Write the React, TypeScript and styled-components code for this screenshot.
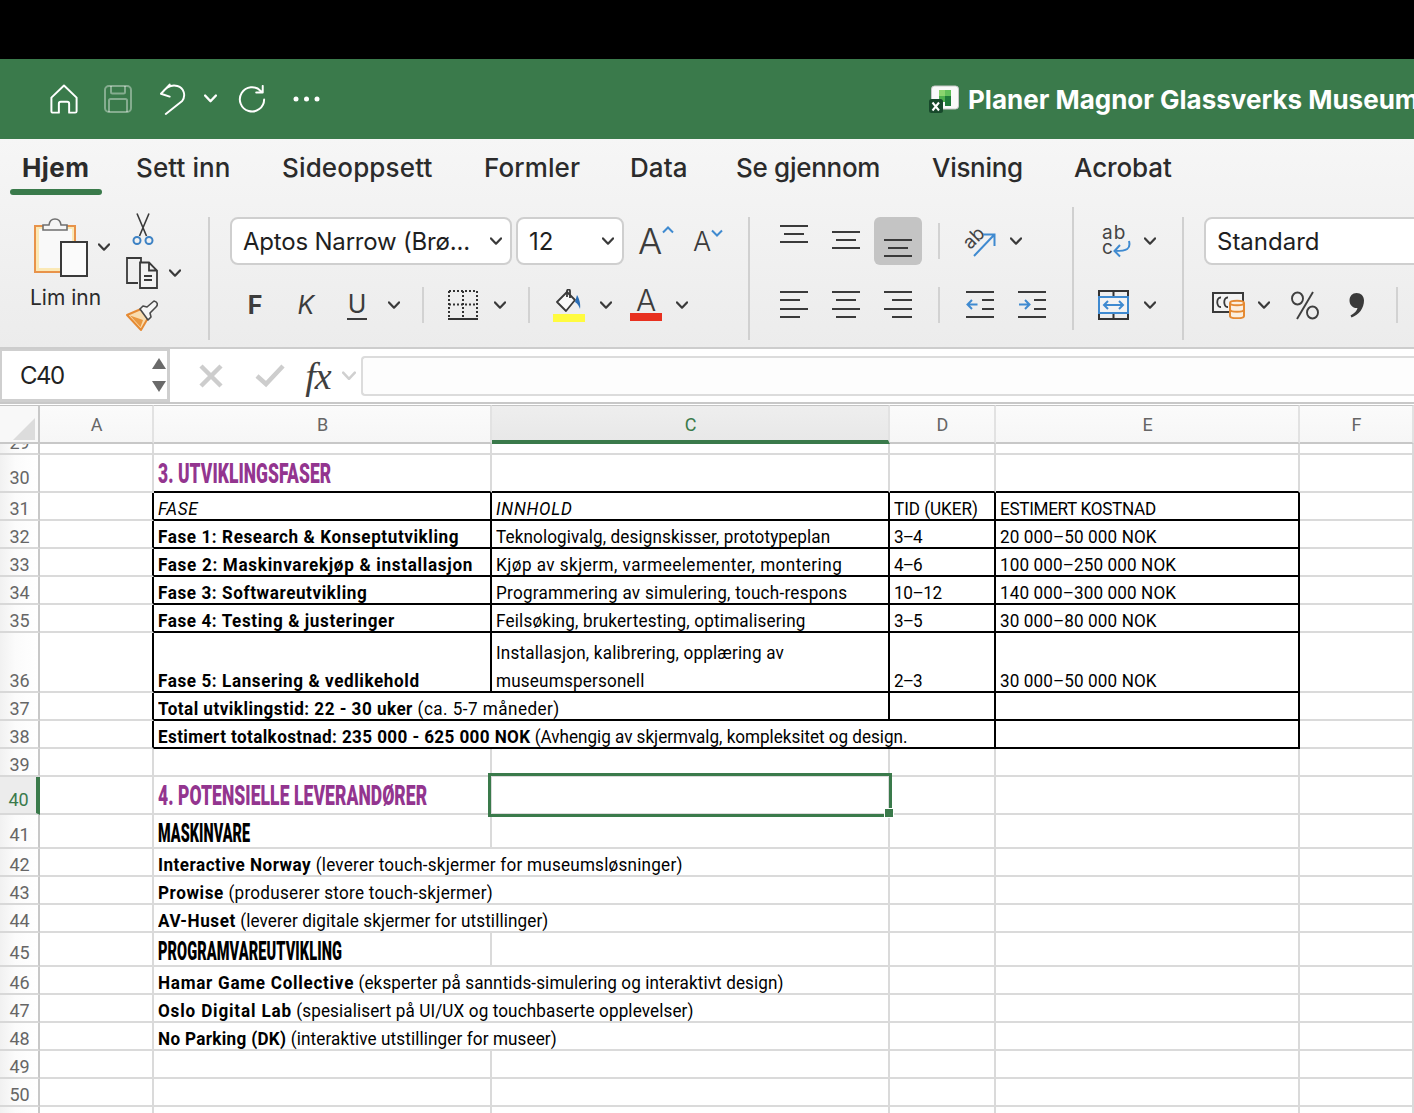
import React from "react";
import styled, { createGlobalStyle } from "styled-components";

const GREEN = "#3a7a4b";
const INK = "#3c3c3c";
const UI = `Inter, "Liberation Sans", sans-serif`;
const CELL = `Roboto, "Liberation Sans", sans-serif`;

const Global = createGlobalStyle`
  html, body { margin: 0; padding: 0; background: #fff; overflow: hidden; }
  body { width: 1414px; height: 1113px; font-family: ${UI}; }
`;

const Page = styled.div`
  width: 1414px;
  height: 1113px;
  overflow: hidden;
  display: flex;
  flex-direction: column;
`;
const BlackBar = styled.div`
  height: 59px;
  flex: none;
  background: #000;
`;
const TitleBar = styled.div`
  height: 80px;
  flex: none;
  background: ${GREEN};
  display: flex;
  align-items: center;
  padding-left: 50px;
  overflow: hidden;
`;
const QuickIcons = styled.div`
  display: flex;
  align-items: center;
  width: 879px;
  flex: none;
`;
const QuickSlot = styled.div<{ $w: number }>`
  width: ${(p) => p.$w}px;
  flex: none;
  display: flex;
  align-items: center;
`;
const DocTitle = styled.div`
  display: flex;
  align-items: center;
  flex: none;
  gap: 9px;
  color: #fff;
  font-weight: 700;
  font-size: 26px;
  white-space: nowrap;
`;
const Ribbon = styled.div`
  height: 210px;
  flex: none;
  box-sizing: border-box;
  border-bottom: 2px solid #cdcdcd;
  background: linear-gradient(#f6f6f6, #ececec);
  overflow: hidden;
`;
const Tabs = styled.div`
  height: 62px;
  display: flex;
  padding-left: 10px;
`;
const Tab = styled.div<{ $w: number; $ls?: number; $active?: boolean }>`
  position: relative;
  width: ${(p) => p.$w}px;
  flex: none;
  box-sizing: border-box;
  height: 56px;
  line-height: 58px;
  padding-left: 12px;
  font-size: 26px;
  letter-spacing: ${(p) => p.$ls ?? 0}px;
  color: #2b2b2b;
  font-weight: ${(p) => (p.$active ? 700 : 500)};
  white-space: nowrap;
  &::after {
    content: "";
    display: ${(p) => (p.$active ? "block" : "none")};
    position: absolute;
    left: 0;
    width: 92px;
    top: 50px;
    height: 6px;
    border-radius: 3px;
    background: ${GREEN};
  }
`;
const ToolArea = styled.div`
  display: flex;
  height: 146px;
`;
const Group = styled.div<{ $w?: number; $ml?: number }>`
  ${(p) => (p.$w ? `width: ${p.$w}px; flex: none;` : "flex: 1;")}
  padding: 16px 0 0 ${(p) => p.$ml ?? 0}px;
  box-sizing: border-box;
  display: flex;
  flex-direction: column;
  gap: 16px;
`;
const ClipGroup = styled.div`
  width: 208px;
  flex: none;
  display: flex;
  padding: 12px 0 0 34px;
  box-sizing: border-box;
`;
const PasteCol = styled.div`
  width: 92px;
  flex: none;
  padding-top: 4px;
`;
const PasteTop = styled.div`
  display: flex;
  align-items: center;
  gap: 10px;
`;
const PasteLabel = styled.div`
  margin: 7px 0 0 -4px;
  font-size: 21px;
  line-height: 28px;
  color: #2b2b2b;
`;
const ClipStack = styled.div`
  display: flex;
  flex-direction: column;
  gap: 12px;
`;
const ClipLine = styled.div<{ $ml?: number; $mt?: number }>`
  display: flex;
  align-items: center;
  gap: 11px;
  height: 32px;
  margin: ${(p) => p.$mt ?? 0}px 0 0 ${(p) => p.$ml ?? 0}px;
`;
const VDivider = styled.div<{ $top: number }>`
  width: 2px;
  flex: none;
  height: 123px;
  margin-top: ${(p) => p.$top}px;
  background: #d0d0d0;
`;
const ToolRow = styled.div`
  display: flex;
  align-items: center;
  height: 48px;
`;
const Slot = styled.div<{ $w: number; $on?: boolean; $ml?: number }>`
  width: ${(p) => p.$w}px;
  height: 48px;
  flex: none;
  margin-left: ${(p) => p.$ml ?? 0}px;
  display: flex;
  align-items: center;
  justify-content: center;
  border-radius: 6px;
  background: ${(p) => (p.$on ? "#c4c4c4" : "transparent")};
`;
const Select = styled.div<{ $w: number; $ls?: number }>`
  width: ${(p) => p.$w}px;
  height: 48px;
  flex: none;
  box-sizing: border-box;
  border: 2px solid #cfcfcf;
  border-radius: 8px;
  background: #fff;
  display: flex;
  align-items: center;
  justify-content: space-between;
  padding: 0 8px 0 11px;
  margin-right: 4px;
  font-size: 24px;
  letter-spacing: ${(p) => p.$ls ?? 0}px;
  color: #1f1f1f;
  white-space: nowrap;
`;
const ThinDiv = styled.div`
  width: 2px;
  height: 36px;
  background: #d2d2d2;
`;
const LetterBtn = styled.span<{ $italic?: boolean; $bold?: boolean; $under?: boolean }>`
  font-size: 25px;
  font-weight: ${(p) => (p.$bold ? 700 : 400)};
  font-style: ${(p) => (p.$italic ? "italic" : "normal")};
  color: ${INK};
  ${(p) => (p.$under ? `border-bottom: 2px solid ${INK}; line-height: 27px; padding: 0 1px;` : "")}
`;
const BigA = styled.span<{ $size: number; $lh?: number }>`
  font-size: ${(p) => p.$size}px;
  font-weight: 300;
  line-height: ${(p) => p.$lh ?? p.$size}px;
  color: ${INK};
`;
const AStack = styled.div`
  display: flex;
  flex-direction: column;
  align-items: center;
  width: 32px;
`;
const ColorBar = styled.div<{ $c: string }>`
  width: 32px;
  height: 8px;
  margin-top: 1px;
  background: ${(p) => p.$c};
`;
const ALine = styled.div<{ $gap?: number }>`
  display: flex;
  align-items: flex-start;
  gap: ${(p) => p.$gap ?? 0}px;
`;

const FormulaBar = styled.div`
  height: 55px;
  flex: none;
  box-sizing: border-box;
  border-bottom: 2px solid #c8c8c8;
  background: #fff;
  display: flex;
  align-items: flex-start;
`;
const NameBox = styled.div`
  width: 170px;
  height: 53px;
  flex: none;
  box-sizing: border-box;
  border: 2px solid #cfcfcf;
  border-bottom-width: 3px;
  border-right-width: 3px;
  padding: 0 1px 0 18px;
  display: flex;
  align-items: center;
  justify-content: space-between;
  font-size: 24px;
  letter-spacing: -1.5px;
  color: #222;
`;
const Steppers = styled.div`
  display: flex;
  flex-direction: column;
  gap: 12px;
`;
const FxArea = styled.div`
  display: flex;
  align-items: center;
  height: 53px;
  width: 191px;
  flex: none;
  padding-left: 29px;
  box-sizing: border-box;
`;
const FxSlot = styled.div<{ $w: number; $ml?: number }>`
  width: ${(p) => p.$w}px;
  margin-left: ${(p) => p.$ml ?? 0}px;
  flex: none;
  display: flex;
  align-items: center;
  justify-content: center;
`;
const FxText = styled.span`
  font-family: "Liberation Serif", serif;
  font-style: italic;
  font-size: 38px;
  line-height: 40px;
  color: #3f3f3f;
  letter-spacing: -1px;
`;
const FormulaInput = styled.div`
  flex: 1;
  height: 40px;
  margin-top: 7px;
  box-sizing: border-box;
  border: 2px solid #dcdcdc;
  border-right: none;
  border-radius: 4px 0 0 4px;
  background: #fdfdfd;
`;

const Sheet = styled.div`
  flex: 1;
  overflow: hidden;
  padding-top: 1px;
  font-family: ${CELL};
  color: #000;
  font-size: 18px;
`;
const Line = styled.div<{ $h: number }>`
  display: grid;
  grid-template-columns: 40px 114px 338px 398px 106px 304px 114px;
  height: ${(p) => p.$h}px;
`;
const ColHead = styled.div<{ $sel?: boolean }>`
  box-sizing: border-box;
  border-top: 1px solid #c4c4c4;
  border-bottom: 2px solid ${(p) => (p.$sel ? GREEN : "#c8c8c8")};
  border-bottom-width: ${(p) => (p.$sel ? 4 : 2)}px;
  border-right: 2px solid #e2e2e2;
  background: ${(p) => (p.$sel ? "linear-gradient(#eeeeee,#e8e8e8)" : "linear-gradient(#fbfbfb,#f6f6f6)")};
  color: ${(p) => (p.$sel ? GREEN : "#666")};
  font-family: Roboto, "Liberation Sans", sans-serif;
  font-size: 18px;
  display: flex;
  align-items: center;
  justify-content: center;
  padding: ${(p) => (p.$sel ? 2 : 0)}px 0 0 1px;
`;
const Corner = styled.div`
  box-sizing: border-box;
  border-top: 1px solid #c4c4c4;
  border-bottom: 2px solid #c8c8c8;
  border-right: 2px solid #c8c8c8;
  background: #f8f8f8;
  display: flex;
  align-items: flex-end;
  justify-content: flex-end;
  padding: 0 3px 2px 0;
`;
const RowHead = styled.div<{ $sel?: boolean; $pb: number }>`
  box-sizing: border-box;
  border-bottom: 2px solid #d8d8d8;
  border-right: ${(p) => (p.$sel ? 4 : 2)}px solid ${(p) => (p.$sel ? GREEN : "#c8c8c8")};
  background: ${(p) => (p.$sel ? "#ececec" : "linear-gradient(90deg,#f1f1f1,#fbfbfb 40%,#fff)")};
  color: ${(p) => (p.$sel ? GREEN : "#666")};
  font-family: Roboto, "Liberation Sans", sans-serif;
  font-size: 18px;
  line-height: 20px;
  overflow: hidden;
  display: flex;
  align-items: flex-end;
  justify-content: center;
  padding: 0 0 ${(p) => p.$pb}px 1px;
`;
const Cell = styled.div<{ $span?: number; $r?: boolean; $b?: boolean }>`
  grid-column: span ${(p) => p.$span ?? 1};
  box-sizing: border-box;
  position: relative;
  border-right: 2px solid ${(p) => (p.$r ? "#000" : "#dadada")};
  border-bottom: 2px solid ${(p) => (p.$b ? "#000" : "#dadada")};
  padding: 0 4px;
  display: flex;
  align-items: flex-end;
  white-space: nowrap;
  min-width: 0;
`;
const CellText = styled.div<{ $it?: boolean; $ls?: number }>`
  font-style: ${(p) => (p.$it ? "italic" : "normal")};
  letter-spacing: ${(p) => 0.12 + (p.$ls ?? 0)}px;
  line-height: 28px;
  margin-bottom: -4px;
  white-space: pre;
  transform: scaleX(0.95);
  transform-origin: left bottom;
`;
const Strong = styled.b<{ $ls?: number }>`
  font-weight: 700;
  letter-spacing: ${(p) => 0.62 + (p.$ls ?? 0)}px;
`;
const Tail = styled.span<{ $ls?: number }>`
  letter-spacing: ${(p) => 0.12 + (p.$ls ?? 0)}px;
`;
const HeadingBox = styled.div<{ $purple?: boolean }>`
  margin-bottom: ${(p) => (p.$purple ? 4 : 0)}px;
  line-height: 34px;
`;
const Heading = styled.div<{ $purple?: boolean; $scale: number }>`
  font-family: Roboto, "Liberation Sans", sans-serif;
  font-weight: 900;
  font-size: ${(p) => (p.$purple ? 28 : 25)}px;
  line-height: 34px;
  color: ${(p) => (p.$purple ? "#93358f" : "#000")};
  transform: scaleX(${(p) => p.$scale});
  transform-origin: left center;
  white-space: nowrap;
`;
const Selection = styled.div`
  position: absolute;
  left: -4px;
  top: -4px;
  width: 404px;
  height: 44px;
  box-sizing: border-box;
  border: 3px solid ${GREEN};
  pointer-events: none;
  z-index: 2;
  &::after {
    content: "";
    position: absolute;
    right: -5px;
    bottom: -4px;
    width: 8px;
    height: 8px;
    background: ${GREEN};
    border: 1px solid #fff;
  }
`;

const Chev = ({ c = "#3a3a3a", w = 12 }: { c?: string; w?: number }) => (
  <svg width={w} height={w * 0.7} viewBox="0 0 12 8" fill="none">
    <path d="M1 1.2 6 6.5 11 1.2" stroke={c} strokeWidth="2.2" strokeLinecap="round" strokeLinejoin="round" />
  </svg>
);
const HomeIcon = () => (
  <svg width="28" height="30" viewBox="0 0 30 32" fill="none" stroke="#fff" strokeWidth="2.1" strokeLinejoin="round">
    <path d="M1.5 14.5 15 1.5l13.5 13V29a1.6 1.6 0 0 1-1.6 1.6H20.500V21a2 2 0 0 0-2-2H11.500a2 2 0 0 0-2 2v9.600H3.100A1.600 1.600 0 0 1 1.500 29Z" />
  </svg>
);
const SaveIcon = () => (
  <svg width="28" height="28" viewBox="0 0 28 28" fill="none" stroke="#fff" strokeOpacity=".38" strokeWidth="2" style={{ marginLeft: 4 }}>
    <rect x="1" y="1" width="26" height="26" rx="4" />
    <path d="M7 1v6a1.500 1.500 0 0 0 1.500 1.500h11A1.500 1.500 0 0 0 21 7V1M5 27V15.500A1.500 1.500 0 0 1 6.500 14h15a1.500 1.500 0 0 1 1.500 1.500V27" />
  </svg>
);
const UndoIcon = () => (
  <svg width="27" height="33" viewBox="0 0 28 33" fill="none" stroke="#fff" strokeWidth="2" strokeLinecap="round" strokeLinejoin="round">
    <path d="M10 1 1 10.500l9 3M1.500 10C7 3 13 1 18 2.500c7 2 9 10 5 15.500L6 31.500" />
  </svg>
);
const RedoIcon = () => (
  <svg width="28" height="28" viewBox="0 0 30 30" fill="none" stroke="#fff" strokeWidth="2.1" strokeLinecap="round" strokeLinejoin="round">
    <path d="M24.500 6.500A13 13 0 1 0 28 15.500M26.500 1v7h-7" />
  </svg>
);
const Dots = () => (
  <svg width="28" height="6" viewBox="0 0 28 6" fill="#fff">
    <circle cx="3" cy="3" r="2.500" />
    <circle cx="13.500" cy="3" r="2.500" />
    <circle cx="24" cy="3" r="2.500" />
  </svg>
);
const ExcelIcon = () => (
  <svg width="30" height="29" viewBox="0 0 30 29">
    <rect x="2.500" y="1" width="27" height="23" rx="3" fill="#fafafa" stroke="#c8c8c8" />
    <rect x="10" y="5" width="6" height="6" fill="#8bd46e" />
    <rect x="16" y="5" width="6" height="6" fill="#62c15a" />
    <rect x="16" y="11" width="6" height="10" fill="#1f7a3a" />
    <rect x="10" y="11" width="6" height="6" fill="#4fb04f" />
    <rect x="0" y="14" width="14" height="14" rx="2.500" fill="#17482b" />
    <path d="M3.500 17.500 10 25.500M10 17.500 3.500 25.500" stroke="#fff" strokeWidth="2" />
  </svg>
);
const ClipboardIcon = () => (
  <svg width="54" height="60" viewBox="0 0 54 60">
    <rect x="1" y="9" width="40" height="46" fill="#fbe9b6" stroke="#e8934a" strokeWidth="2" />
    <rect x="5" y="12" width="33" height="39" fill="#f9f9f9" />
    <path d="M9 13V8h6c1-8 11-8 12 0h6v5Z" fill="#f5f5f5" stroke="#6f6f6f" strokeWidth="1.600" />
    <rect x="27" y="25" width="26" height="34" fill="#fbfbfb" stroke="#3a3a3a" strokeWidth="2" />
  </svg>
);
const ScissorsIcon = () => (
  <svg width="22" height="33" viewBox="0 0 22 33" fill="none">
    <path d="M5 0.500 14.500 23M17 0.500 7.500 23" stroke="#3a3a3a" strokeWidth="1.600" />
    <circle cx="5" cy="27.500" r="3.500" stroke="#3d82c4" strokeWidth="2" />
    <circle cx="17" cy="27.500" r="3.500" stroke="#3d82c4" strokeWidth="2" />
  </svg>
);
const CopyIcon = () => (
  <svg width="32" height="32" viewBox="0 0 32 32" fill="none" stroke="#3a3a3a" strokeWidth="1.800">
    <path d="M12 26H1V1h14v4" />
    <path d="M14 5.500h9l8 8V31H14ZM23 5.500V13.500h8" fill="#f3f3f3" />
    <path d="M18 19h8M18 23h8" />
  </svg>
);
const BrushIcon = () => (
  <svg width="32" height="31" viewBox="0 0 32 31" fill="none">
    <path d="M1 15 15 9l7 9-7 12Z" fill="#f9dcae" stroke="#e58a33" strokeWidth="2" strokeLinejoin="round" />
    <path d="M4 15.500 17 20l-2.500 7Z" fill="#e9973f" />
    <path d="M14 9l3-3 4 1 7-6c4 1 4 4 2 6l-6 6 1 4-3 3Z" fill="#f6f6f6" stroke="#4a4a4a" strokeWidth="1.600" strokeLinejoin="round" />
  </svg>
);
const Lines = ({ h, l }: { h: number; l: [number, number, number][] }) => (
  <svg width="28" height={h} viewBox={`0 0 28 ${h}`} fill="#3a3a3a">
    {l.map(([x, y, w], i) => (
      <rect key={i} x={x} y={y} width={w} height="2" />
    ))}
  </svg>
);
const Indent = ({ right }: { right?: boolean }) => (
  <svg width="28" height="28" viewBox="0 0 28 28" fill="none">
    <path d="M0 1h28M0 26h28M16 9h12M16 18h12" stroke="#3a3a3a" strokeWidth="2" />
    {right ? (
      <path d="M1 13.500h10M7 9l4.500 4.500L7 18" stroke="#3f8ad0" strokeWidth="2" />
    ) : (
      <path d="M11.500 13.500H1.500M6 9l-4.500 4.500L6 18" stroke="#3f8ad0" strokeWidth="2" />
    )}
  </svg>
);
const Orient = () => (
  <svg width="34" height="32" viewBox="0 0 34 32" fill="none" overflow="visible">
    <text x="0" y="20" transform="rotate(-45 10 14)" fontFamily="Inter, sans-serif" fontSize="19" fill="#444">ab</text>
    <path d="M11 31 31 10M20 9.500h11.500V21" stroke="#3f8ad0" strokeWidth="2" />
  </svg>
);
const WrapIcon = () => (
  <svg width="30" height="34" viewBox="0 0 30 34" fill="none" overflow="visible">
    <text x="0" y="15" fontFamily="Inter, sans-serif" fontSize="19" fill="#444" letterSpacing="1">ab</text>
    <text x="0" y="30" fontFamily="Inter, sans-serif" fontSize="19" fill="#444">c</text>
    <path d="M27 17c2 8-2 10-14 10M18 21l-5.500 6 5.500 5.500" stroke="#3f8ad0" strokeWidth="2" />
  </svg>
);
const BorderIcon = () => (
  <svg width="30" height="30" viewBox="0 0 30 30" fill="none" stroke="#333" strokeWidth="2">
    <path d="M1 1h28M1 1v27M29 1v27M15 1v27M1 14.500h28" strokeDasharray="2 2" />
    <path d="M0 29h30" />
  </svg>
);
const BucketIcon = () => (
  <svg width="26" height="24" viewBox="0 0 26 24" fill="none">
    <path d="M1 13 11 3l8 8-9 11Z" fill="#fafafa" stroke="#3a3a3a" strokeWidth="1.800" strokeLinejoin="round" />
    <path d="M11 8V2c0-2 3-2 3 0v7" stroke="#3a3a3a" strokeWidth="1.800" />
    <path d="M21 6c2 3 4 9 3 14-1-3-2-5-5-7Z" fill="#2a6db5" />
  </svg>
);
const MergeIcon = () => (
  <svg width="31" height="30" viewBox="0 0 31 30" fill="none">
    <rect x="1" y="1" width="29" height="28" stroke="#333" strokeWidth="2" />
    <path d="M15.500 1v6M15.500 23v6" stroke="#333" strokeWidth="2" />
    <rect x="1" y="7" width="29" height="16" fill="#f3f3f3" stroke="#3f8ad0" strokeWidth="2" />
    <path d="M6 15h19M10 11l-4 4 4 4M21 11l4 4-4 4" stroke="#3f8ad0" strokeWidth="2" />
  </svg>
);
const CurrencyIcon = () => (
  <svg width="33" height="27" viewBox="0 0 33 27" fill="none">
    <rect x="1" y="1" width="30" height="19" fill="#f3f3f3" stroke="#3a3a3a" strokeWidth="2" />
    <path d="M9 5.500C4 5 4 15.500 9 15M16 5.500c-5-.5-5 10 0 9.500" stroke="#3a3a3a" strokeWidth="1.800" />
    <path d="M18 11c0-3 14-3 14 0v13c0 3-14 3-14 0Z" fill="#fbefe0" stroke="#e58a33" strokeWidth="2" />
    <path d="M18 11c0 3 14 3 14 0M18 17.500c0 3 14 3 14 0" stroke="#e58a33" strokeWidth="2" />
  </svg>
);
const PercentIcon = () => (
  <svg width="30" height="29" viewBox="0 0 30 29" fill="none" stroke="#3f3f3f" strokeWidth="1.900">
    <ellipse cx="7.500" cy="7.500" rx="5.500" ry="6" />
    <ellipse cx="22.500" cy="21.500" rx="5.500" ry="6" />
    <path d="M23 1 7 28" />
  </svg>
);
const CommaIcon = () => (
  <svg width="16" height="25" viewBox="0 0 16 25" fill="#3a3a3a">
    <path d="M7.500 0c4.500 0 7.500 3 7.500 7.500C15 15 10 22 2.500 24.500L1.500 22.500C5.500 20.500 8 17.500 8.500 15 4 15.500 0.500 12 0.500 7.500 0.500 3 3.500 0 7.500 0Z" />
  </svg>
);
const Caret = ({ up }: { up?: boolean }) => (
  <svg width="12" height="8" viewBox="0 0 12 8" fill="none" style={{ marginTop: up ? 3 : 1 }}>
    <path d={up ? "M1 6.500 6 1.500l5 5" : "M1 1.500l5 5 5-5"} stroke="#3f8ad0" strokeWidth="2" />
  </svg>
);
const Tri = ({ up }: { up?: boolean }) => (
  <svg width="14" height="11" viewBox="0 0 14 11" fill="#6a6a6a">
    <path d={up ? "M7 0 14 11H0Z" : "M7 11 0 0h14Z"} />
  </svg>
);
const CrossIcon = () => (
  <svg width="24" height="24" viewBox="0 0 24 24" stroke="#cdcdcd" strokeWidth="4.500">
    <path d="M2 2 22 22M22 2 2 22" />
  </svg>
);
const CheckIcon = () => (
  <svg width="30" height="24" viewBox="0 0 30 24" fill="none" stroke="#cdcdcd" strokeWidth="4.500">
    <path d="M2 12 11 20 28 2" />
  </svg>
);

const colLetters = ["A", "B", "C", "D", "E", "F"];
type C = { t?: React.ReactNode; span?: number; r?: boolean; b?: boolean; it?: boolean; sel?: boolean; ls?: number };

const Txt = (a: string, b?: string, la?: number, lb?: number) => (
  <>
    <Strong $ls={la}>{a}</Strong>
    {b ? <Tail $ls={lb}>{b}</Tail> : null}
  </>
);
const H = (text: string, purple: boolean, scale: number) => (
  <HeadingBox $purple={purple}>
    <Heading $purple={purple} $scale={scale}>{text}</Heading>
  </HeadingBox>
);
const blackRow = (cells: C[]): C[] => [{ r: true }, ...cells.map((c) => ({ ...c, r: true, b: true })), {}];
const rows: { n: number; h: number; sel?: boolean; cells: C[] }[] = [
  { n: 29, h: 11, cells: [{}, {}, {}, {}, {}, {}] },
  { n: 30, h: 38, cells: [{}, { b: true, t: H("3. UTVIKLINGSFASER", true, 0.655) }, { b: true }, { b: true }, { b: true }, {}] },
  { n: 31, h: 28, cells: blackRow([{ t: "FASE", it: true, ls: 0.5 }, { t: "INNHOLD", it: true, ls: 0.7 }, { t: "TID (UKER)", ls: -0.16 }, { t: "ESTIMERT KOSTNAD", ls: -0.44 }]) },
  { n: 32, h: 28, cells: blackRow([{ t: Txt("Fase 1: Research & Konseptutvikling") }, { t: "Teknologivalg, designskisser, prototypeplan" }, { t: "3–4", ls: -1.1 }, { t: "20 000–50 000 NOK" }]) },
  { n: 33, h: 28, cells: blackRow([{ t: Txt("Fase 2: Maskinvarekjøp & installasjon", undefined, 0.1) }, { t: "Kjøp av skjerm, varmeelementer, montering", ls: 0.37 }, { t: "4–6", ls: -1.1 }, { t: "100 000–250 000 NOK" }]) },
  { n: 34, h: 28, cells: blackRow([{ t: Txt("Fase 3: Softwareutvikling") }, { t: "Programmering av simulering, touch-respons", ls: 0.15 }, { t: "10–12", ls: -0.5 }, { t: "140 000–300 000 NOK" }]) },
  { n: 35, h: 28, cells: blackRow([{ t: Txt("Fase 4: Testing & justeringer") }, { t: "Feilsøking, brukertesting, optimalisering", ls: 0.08 }, { t: "3–5", ls: -1.1 }, { t: "30 000–80 000 NOK" }]) },
  { n: 36, h: 60, cells: blackRow([{ t: Txt("Fase 5: Lansering & vedlikehold") }, { t: "Installasjon, kalibrering, opplæring av\nmuseumspersonell", ls: 0.08 }, { t: "2–3", ls: -1.1 }, { t: "30 000–50 000 NOK" }]) },
  { n: 37, h: 28, cells: blackRow([{ span: 2, t: Txt("Total utviklingstid: 22 - 30 uker", " (ca. 5-7 måneder)", -0.12, 0.37) }, {}, {}]) },
  { n: 38, h: 28, cells: blackRow([{ span: 3, t: Txt("Estimert totalkostnad: 235 000 - 625 000 NOK", " (Avhengig av skjermvalg, kompleksitet og design.", -0.21, -0.14) }, {}]) },
  { n: 39, h: 28, cells: [{}, {}, {}, {}, {}, {}] },
  { n: 40, h: 38, sel: true, cells: [{}, { t: H("4. POTENSIELLE LEVERANDØRER", true, 0.658) }, { sel: true }, {}, {}, {}] },
  { n: 41, h: 34, cells: [{}, { t: H("MASKINVARE", false, 0.606) }, {}, {}, {}, {}] },
  { n: 42, h: 28, cells: [{}, { span: 2, t: Txt("Interactive Norway", " (leverer touch-skjermer for museumsløsninger)", -0.1, 0.12) }, {}, {}, {}] },
  { n: 43, h: 28, cells: [{}, { span: 2, t: Txt("Prowise", " (produserer store touch-skjermer)", 0, 0.17) }, {}, {}, {}] },
  { n: 44, h: 28, cells: [{}, { span: 2, t: Txt("AV-Huset", " (leverer digitale skjermer for utstillinger)") }, {}, {}, {}] },
  { n: 45, h: 34, cells: [{}, { t: H("PROGRAMVAREUTVIKLING", false, 0.613) }, {}, {}, {}, {}] },
  { n: 46, h: 28, cells: [{}, { span: 2, t: Txt("Hamar Game Collective", " (eksperter på sanntids-simulering og interaktivt design)", 0.14) }, {}, {}, {}] },
  { n: 47, h: 28, cells: [{}, { span: 2, t: Txt("Oslo Digital Lab", " (spesialisert på UI/UX og touchbaserte opplevelser)", 0.25) }, {}, {}, {}] },
  { n: 48, h: 28, cells: [{}, { span: 2, t: Txt("No Parking (DK)", " (interaktive utstillinger for museer)", -0.28) }, {}, {}, {}] },
  { n: 49, h: 28, cells: [{}, {}, {}, {}, {}, {}] },
  { n: 50, h: 28, cells: [{}, {}, {}, {}, {}, {}] },
  { n: 51, h: 28, cells: [{}, {}, {}, {}, {}, {}] },
];

const headPad = (h: number) => (h === 38 ? 3 : h === 34 ? 2 : 0);

export default function App() {
  return (
    <Page>
      <Global />
      <BlackBar />
      <TitleBar>
        <QuickIcons>
          <QuickSlot $w={50}><HomeIcon /></QuickSlot>
          <QuickSlot $w={60}><SaveIcon /></QuickSlot>
          <QuickSlot $w={44}><UndoIcon /></QuickSlot>
          <QuickSlot $w={34}><Chev w={13} c="#fff" /></QuickSlot>
          <QuickSlot $w={55}><RedoIcon /></QuickSlot>
          <QuickSlot $w={40}><Dots /></QuickSlot>
        </QuickIcons>
        <DocTitle>
          <ExcelIcon />
          Planer Magnor Glassverks Museum
        </DocTitle>
      </TitleBar>
      <Ribbon>
        <Tabs>
          <Tab $w={114} $ls={0.4} $active>Hjem</Tab>
          <Tab $w={146} $ls={0.1}>Sett inn</Tab>
          <Tab $w={202} $ls={0.15}>Sideoppsett</Tab>
          <Tab $w={146} $ls={0.1}>Formler</Tab>
          <Tab $w={106} $ls={0.1}>Data</Tab>
          <Tab $w={196} $ls={-0.3}>Se gjennom</Tab>
          <Tab $w={142} $ls={-0.3}>Visning</Tab>
          <Tab $w={120} $ls={-0.1}>Acrobat</Tab>
        </Tabs>
        <ToolArea>
          <ClipGroup>
            <PasteCol>
              <PasteTop>
                <ClipboardIcon />
                <Chev />
              </PasteTop>
              <PasteLabel>Lim inn</PasteLabel>
            </PasteCol>
            <ClipStack>
              <ClipLine $ml={6}><ScissorsIcon /></ClipLine>
              <ClipLine><CopyIcon /><Chev /></ClipLine>
              <ClipLine $mt={-2}><BrushIcon /></ClipLine>
            </ClipStack>
          </ClipGroup>
          <VDivider $top={16} />
          <Group $w={538} $ml={20}>
            <ToolRow>
              <Select $w={282} $ls={-0.2}>Aptos Narrow (Brø...<Chev /></Select>
              <Select $w={108}>12<Chev /></Select>
              <Slot $w={56}>
                <ALine $gap={-2}><BigA $size={36}>A</BigA><Caret up /></ALine>
              </Slot>
              <Slot $w={48}>
                <ALine><BigA $size={27}>A</BigA><Caret /></ALine>
              </Slot>
            </ToolRow>
            <ToolRow>
              <Slot $w={50}><LetterBtn $bold>F</LetterBtn></Slot>
              <Slot $w={52}><LetterBtn $italic>K</LetterBtn></Slot>
              <Slot $w={50}><LetterBtn $under>U</LetterBtn></Slot>
              <Slot $w={24}><Chev /></Slot>
              <Slot $w={34}><ThinDiv /></Slot>
              <Slot $w={46}><BorderIcon /></Slot>
              <Slot $w={28}><Chev /></Slot>
              <Slot $w={30}><ThinDiv /></Slot>
              <Slot $w={50}>
                <AStack><BucketIcon /><ColorBar $c="#fffb3f" /></AStack>
              </Slot>
              <Slot $w={24}><Chev /></Slot>
              <Slot $w={56}>
                <AStack><BigA $size={30} $lh={23}>A</BigA><ColorBar $c="#e8301f" /></AStack>
              </Slot>
              <Slot $w={16}><Chev /></Slot>
            </ToolRow>
          </Group>
          <VDivider $top={16} />
          <Group $w={322} $ml={18}>
            <ToolRow>
              <Slot $w={52}><Lines h={32} l={[[0, 0, 28], [4, 8, 20], [0, 16, 28]]} /></Slot>
              <Slot $w={52}><Lines h={32} l={[[0, 6, 28], [4, 14, 20], [0, 22, 28]]} /></Slot>
              <Slot $w={48} $ml={2} $on><Lines h={32} l={[[0, 14, 28], [4, 22, 20], [0, 30, 28]]} /></Slot>
              <Slot $w={34}><ThinDiv /></Slot>
              <Slot $w={48}><Orient /></Slot>
              <Slot $w={24}><Chev /></Slot>
            </ToolRow>
            <ToolRow>
              <Slot $w={52}><Lines h={28} l={[[0, 0, 28], [0, 8, 20], [0, 17, 28], [0, 25, 20]]} /></Slot>
              <Slot $w={52}><Lines h={28} l={[[0, 0, 28], [4, 8, 20], [0, 17, 28], [4, 25, 20]]} /></Slot>
              <Slot $w={52}><Lines h={28} l={[[0, 0, 28], [8, 8, 20], [0, 17, 28], [8, 25, 20]]} /></Slot>
              <Slot $w={30}><ThinDiv /></Slot>
              <Slot $w={52}><Indent /></Slot>
              <Slot $w={52}><Indent right /></Slot>
            </ToolRow>
          </Group>
          <VDivider $top={6} />
          <Group $w={108} $ml={16}>
            <ToolRow>
              <Slot $w={50} $ml={2}><WrapIcon /></Slot>
              <Slot $w={16}><Chev /></Slot>
            </ToolRow>
            <ToolRow>
              <Slot $w={46}><MergeIcon /></Slot>
              <Slot $w={28}><Chev /></Slot>
            </ToolRow>
          </Group>
          <VDivider $top={16} />
          <Group $ml={20}>
            <ToolRow>
              <Select $w={320}>Standard</Select>
            </ToolRow>
            <ToolRow>
              <Slot $w={48}><CurrencyIcon /></Slot>
              <Slot $w={24}><Chev /></Slot>
              <Slot $w={58}><PercentIcon /></Slot>
              <Slot $w={46}><CommaIcon /></Slot>
              <Slot $w={34}><ThinDiv /></Slot>
            </ToolRow>
          </Group>
        </ToolArea>
      </Ribbon>
      <FormulaBar>
        <NameBox>
          C40
          <Steppers><Tri up /><Tri /></Steppers>
        </NameBox>
        <FxArea>
          <FxSlot $w={24}><CrossIcon /></FxSlot>
          <FxSlot $w={30} $ml={32}><CheckIcon /></FxSlot>
          <FxSlot $w={40} $ml={13}><FxText>fx</FxText></FxSlot>
          <FxSlot $w={22}><Chev c="#d0d0d0" w={14} /></FxSlot>
        </FxArea>
        <FormulaInput />
      </FormulaBar>
      <Sheet>
        <Line $h={39}>
          <Corner>
            <svg width="22" height="22" viewBox="0 0 22 22" fill="#dcdcdc"><path d="M22 0V22H0Z" /></svg>
          </Corner>
          {colLetters.map((c) => (
            <ColHead key={c} $sel={c === "C"}>{c}</ColHead>
          ))}
        </Line>
        {rows.map((r) => (
          <Line key={r.n} $h={r.h}>
            <RowHead $sel={r.sel} $pb={headPad(r.h)}>{r.n}</RowHead>
            {r.cells.map((c, i) => (
              <Cell key={i} $span={c.span} $r={c.r} $b={c.b}>
                {c.sel ? <Selection /> : null}
                {c.t !== undefined ? (
                  typeof c.t === "string" ? <CellText $it={c.it} $ls={c.ls}>{c.t}</CellText> : <CellText>{c.t}</CellText>
                ) : null}
              </Cell>
            ))}
          </Line>
        ))}
      </Sheet>
    </Page>
  );
}
